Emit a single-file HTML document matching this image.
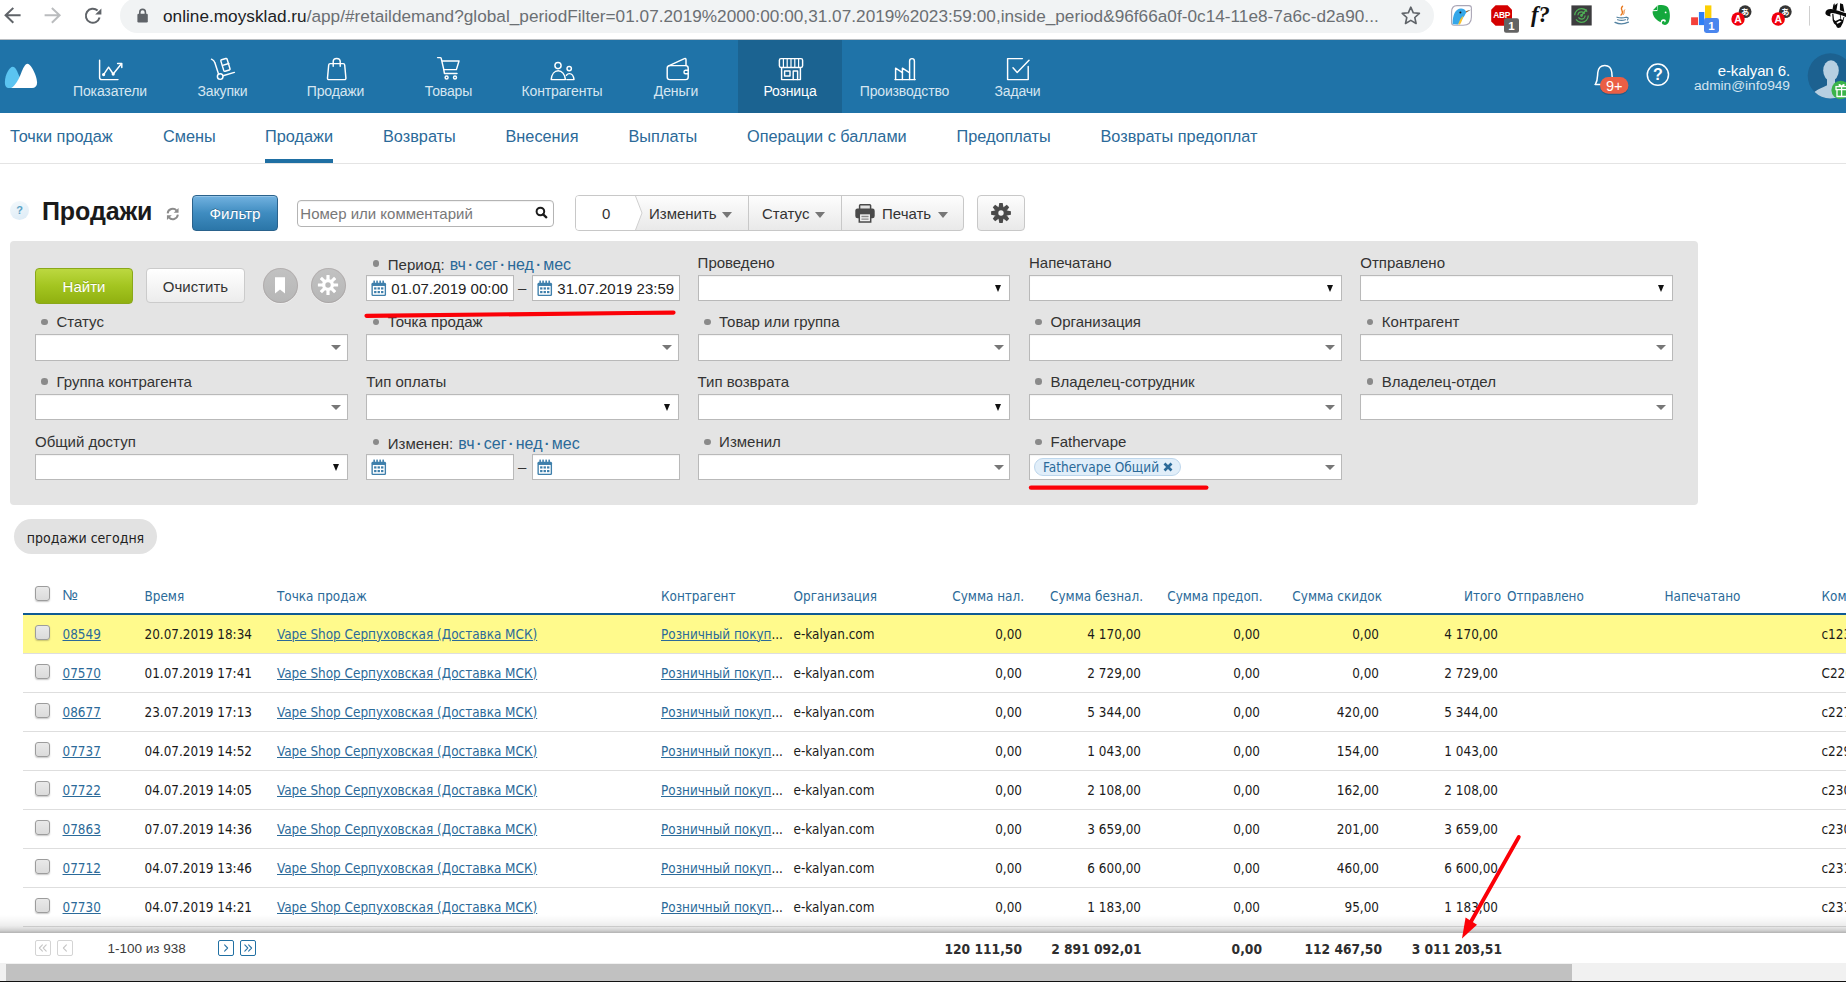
<!DOCTYPE html>
<html lang="ru">
<head>
<meta charset="utf-8">
<title>МойСклад — Продажи</title>
<style>
*{box-sizing:border-box;margin:0;padding:0}
html,body{width:1846px;height:982px;overflow:hidden;background:#fff}
body{position:relative;font-family:"Liberation Sans",Arial,sans-serif;font-size:15px;color:#333}
.abs{position:absolute}
a{color:inherit}
/* ---------- browser chrome ---------- */
#chrome{position:absolute;left:0;top:0;width:1846px;height:40px;background:#fff}
#pill{position:absolute;left:120px;top:-2px;width:1314px;height:35px;border-radius:18px;background:#f1f3f4}
#url{position:absolute;left:163px;top:5px;font-size:17.2px;line-height:22px;white-space:nowrap;color:#6b6f73;letter-spacing:0.02px}
#url b{font-weight:normal;color:#202124}
/* ---------- main nav ---------- */
#nav{position:absolute;left:0;top:40px;width:1846px;height:73px;background:#1f73a8}
#nav .act{position:absolute;left:738px;top:0;width:104px;height:73px;background:#1b6391}
.ni{position:absolute;top:43px;width:140px;margin-left:-70px;text-align:center;font-size:14px;line-height:16px;color:#d6e6f1;letter-spacing:-0.15px;white-space:nowrap}
.ni.on{color:#fff}
.nic{position:absolute;top:16px;width:30px;height:28px;margin-left:-15px}
.nic svg{display:block;width:30px;height:28px;fill:none;stroke:#fff;stroke-width:1.4;stroke-linecap:round;stroke-linejoin:round}
/* ---------- sub nav ---------- */
#subnav{position:absolute;left:0;top:113px;width:1846px;height:51px;background:#fff;border-bottom:1px solid #e4e4e4}
.sn{position:absolute;top:14px;font-size:16.3px;line-height:19px;color:#2b6a99;white-space:nowrap}
#snu{position:absolute;left:265px;top:46px;width:68px;height:4px;background:#1f6fa3}

/* ---------- toolbar ---------- */
#help{position:absolute;left:10px;top:201px;width:19px;height:19px;border-radius:50%;background:linear-gradient(160deg,#f4f9fc,#dcebf6);color:#5da3c6;font:bold 11px/19px "Liberation Sans",Arial,sans-serif;text-align:center}
#title{position:absolute;left:42px;top:196px;font-weight:bold;font-size:25px;line-height:30px;color:#1a1a1a;white-space:nowrap;letter-spacing:-0.1px}
#bfilter{position:absolute;left:192px;top:195px;width:86px;height:36px;border:1px solid #2a628c;border-radius:4px;background:linear-gradient(#72b2e0,#3f8cc0 50%,#2b76a8);color:#fff;font-size:15.200px;line-height:35px;text-align:center;text-shadow:0 -1px 0 rgba(0,0,0,.25);box-shadow:inset 0 1px 0 rgba(255,255,255,.25)}
#search{position:absolute;left:297px;top:200px;width:257px;height:27px;border:1px solid #b4b4b4;border-radius:4px;background:#fff;box-shadow:inset 0 1px 1px rgba(0,0,0,.06)}
#search span{position:absolute;left:2.300px;top:4px;font-size:15px;line-height:17px;color:#787878;white-space:nowrap}
#bgrp{position:absolute;left:575px;top:195px;width:389px;height:36px;border:1px solid #c8c8c8;border-radius:4px;background:linear-gradient(#fdfdfd,#e9e9e9);overflow:hidden}
#bgrp .t{position:absolute;top:9px;font-size:15px;line-height:17px;color:#333;white-space:nowrap}
#bgrp .sep{position:absolute;top:0;width:1px;height:34px;background:#c8c8c8}
.caret{position:absolute;width:0;height:0;border-left:5.5px solid transparent;border-right:5.5px solid transparent;border-top:6px solid #777}
#bgear{position:absolute;left:977px;top:195px;width:48px;height:36px;border:1px solid #c8c8c8;border-radius:4px;background:linear-gradient(#fdfdfd,#e9e9e9)}

/* ---------- filter panel ---------- */
#filter{position:absolute;left:10px;top:241px;width:1688px;height:264px;border-radius:4px;background:#e4e4e4}
#filter .lb{position:absolute;font-size:15px;line-height:17px;color:#333;white-space:nowrap}
#filter .lb i{position:absolute;left:-15.2px;top:5.6px;width:6.6px;height:6.6px;border-radius:50%;background:#8a8a8a}
#filter .lb a{color:#2b6a99;text-decoration:none;font-size:16px}
#filter .lb s{text-decoration:none;color:#2b6a99;padding:0 2.300px;font-size:14px;font-weight:bold}
#filter .lb a:first-of-type{margin-left:1px}
.sel{position:absolute;width:312.600px;height:27px;border:1px solid #b9b9b9;background:#fff;box-shadow:inset 0 1px 1px rgba(0,0,0,.05)}
.sel.r1{height:26px}
.sel .c{position:absolute;right:5.7px;top:10px;width:0;height:0;border-left:5.2px solid transparent;border-right:5.2px solid transparent;border-top:5.5px solid #777}
.sel .n{position:absolute;right:8px;top:8.5px;width:0;height:0;border-left:3.800px solid transparent;border-right:3.800px solid transparent;border-top:7.400px solid #111}
.dt{position:absolute;width:148px;height:26px;border:1px solid #b9b9b9;background:#fff;font-size:15px;line-height:26px;color:#222;white-space:nowrap;padding-left:24px;box-shadow:inset 0 1px 1px rgba(0,0,0,.05)}
.dt svg{position:absolute;left:4px;top:4px}
#bfind{position:absolute;left:25px;top:27px;width:98px;height:36px;border:1px solid #8aa81a;border-radius:4px;background:linear-gradient(#bcd840,#a3c520 50%,#90b010);color:#fff;font-size:15px;line-height:36px;text-align:center;text-shadow:0 -1px 0 rgba(0,0,0,.18)}
#bclear{position:absolute;left:136px;top:27px;width:99px;height:35px;border:1px solid #cbcbcb;border-radius:4px;background:linear-gradient(#fff,#ececec);color:#333;font-size:15px;line-height:35px;text-align:center}
.rb{position:absolute;width:35px;height:35px;border-radius:50%;background:linear-gradient(#c2c2c2,#b6b6b6);box-shadow:inset 0 0 0 1px rgba(110,90,90,.16),0 1px 0 rgba(255,255,255,.35)}
#chip{position:absolute;left:4px;top:3px;width:147px;height:18px;border-radius:9px;background:#e1eef9;border:1px solid #bdd6ec;color:#2b6a99;font:13.5px/16px "DejaVu Sans Condensed","Liberation Sans",sans-serif;padding:0 0 0 8px;white-space:nowrap}

/* ---------- saved filter pill + table ---------- */
#today{position:absolute;left:14px;top:519px;width:143px;height:35px;border-radius:18px;background:#e2e2e2;font:14px/38px "DejaVu Sans Condensed","Liberation Sans",sans-serif;color:#222;text-align:center;white-space:nowrap}
#tbl{position:absolute;left:23px;top:575px;width:1823px;height:360px;font:13.4px/16px "DejaVu Sans Condensed","Liberation Sans",sans-serif;color:#1a1a1a;overflow:hidden}
#tbl .hl{position:absolute;left:0;top:38px;width:1823px;height:2px;background:#0f5a93}
#tbl .row{position:absolute;left:0;width:1823px;height:39px;border-bottom:1px solid #dedede}
#tbl .row.y{background:#fffa8c}
#tbl .c{position:absolute;top:12px;white-space:nowrap}
#tbl .h .c{top:13.5px;color:#2b6a99}
#tbl .h{position:absolute;left:0;top:0;width:1823px;height:38px}
#tbl .r{text-align:right}
#tbl a{color:#2b6a99;text-decoration:underline;text-underline-offset:1px;text-decoration-thickness:1px}
.cb{position:absolute;left:12px;width:15px;height:15px;border:1px solid #9c9c9c;border-radius:3px;background:linear-gradient(#e9e9e9,#dbdbdb);box-shadow:0 1px 1.5px rgba(0,0,0,.22)}

/* ---------- footer ---------- */
#fshadow{position:absolute;left:0;top:915px;width:1846px;height:18px;background:linear-gradient(rgba(0,0,0,0),rgba(0,0,0,.03) 30%,rgba(0,0,0,.07) 58%,rgba(0,0,0,.11) 70%,rgba(0,0,0,.19) 86%,rgba(0,0,0,.30))}
#fband{display:none}
#foot{position:absolute;left:0;top:933px;width:1846px;height:30px;background:#fff}
.pg{position:absolute;top:7px;width:16px;height:16px;border:1px solid #d4d4d4;border-radius:2px;background:#fff;color:#c0c0c0;font:13px/13px "Liberation Sans",Arial,sans-serif;text-align:center}
.pg.b{border-color:#2170a3;border-width:1.500px}
.pg svg{position:absolute;left:0;top:0}
.pg.b svg{left:-.500px;top:-.500px}
#pgt{position:absolute;left:107.500px;top:7.600px;font-size:13.500px;line-height:16px;color:#3c3c3c;white-space:nowrap}
.tot{position:absolute;top:7.500px;width:130px;text-align:right;font:bold 13.7px/17px "DejaVu Sans Condensed","Liberation Sans",sans-serif;color:#2e2e2e;white-space:nowrap}
#sb{position:absolute;left:0;top:963px;width:1846px;height:19px;background:#f1f1f1}
#sbt{position:absolute;left:6px;top:1px;width:1566px;height:17px;background:#c1c1c1}
#sbl{position:absolute;left:0;top:981px;width:1846px;height:1px;background:#111}

#uname{position:absolute;right:56px;top:22px;font-size:15px;line-height:17px;color:#fff;white-space:nowrap;letter-spacing:-0.1px}
#umail{position:absolute;right:56px;top:38px;font-size:13.7px;line-height:16px;color:#d3e4f0;white-space:nowrap}
#filter .lb.p i{top:4.2px}
</style>
</head>
<body>

<!-- ================= browser chrome ================= -->
<div id="chrome">
  <div id="pill"></div>
  <svg class="abs" style="left:0;top:0" width="1846" height="40" viewBox="0 0 1846 40">
    <rect x="0" y="39" width="1846" height="1" fill="#b9bdc1"/>
    <!-- back / forward / reload -->
    <g fill="none" stroke="#5f6368" stroke-width="2" stroke-linecap="square" stroke-linejoin="miter">
      <path d="M19.6 15.3H6.6M12.6 8.6L5.6 15.3L12.6 22"/>
      <path d="M45.6 15.3H58.6M52.6 8.6L59.6 15.3L52.6 22" stroke="#babcbe"/>
      <path d="M99.6 17.6A7 7 0 1 1 97.6 10.6" stroke-linecap="butt"/>
    </g>
    <path d="M101.4 8.4V14.6H95.2z" fill="#5f6368"/>
    <!-- lock -->
    <rect x="137.4" y="13.8" width="10.4" height="8.6" rx="1.2" fill="#5f6368"/>
    <path d="M139.8 14V12.2A2.8 2.8 0 0 1 145.4 12.2V14" fill="none" stroke="#5f6368" stroke-width="1.6"/>
    <!-- star -->
    <path d="M1410.8 7.2l2.5 5.6 6.1.6-4.6 4.1 1.3 6-5.3-3.1-5.3 3.1 1.3-6-4.6-4.1 6.100-.6z" fill="none" stroke="#5f6368" stroke-width="1.6" stroke-linejoin="round"/>
    <!-- kingfisher -->
    <path d="M1457 5.6H1469Q1471.400 5.600 1471.400 8V17Q1471.400 25.200 1463 25.200H1454Q1451.600 25.200 1451.600 22.800V12Q1451.600 5.600 1457 5.600z" fill="#fff" stroke="#aaa6b6" stroke-width="1.1"/>
    <path d="M1452.600 24.200C1452.600 15 1455.500 8.600 1461 8.600C1463.400 8.600 1465 9.800 1465.800 11.200L1470.800 9.800L1466.200 12.600C1464.500 17 1460.500 21 1458 24.400z" fill="#35a7e9"/>
    <path d="M1465.800 11.200L1470.800 9.800L1466.200 12.600z" fill="#b5651d"/>
    <path d="M1458.200 24.400C1459 21 1461 18 1463.200 15.800C1463 19 1461.500 22 1460 24.400z" fill="#f7c331"/>
    <circle cx="1460.400" cy="12.600" r="1" fill="#1a1a1a"/>
    <!-- ABP -->
    <path d="M1495.600 5.300H1507.600L1512 9.700V21.400L1507.600 25.800H1495.600L1491.200 21.400V9.700z" fill="#d40000"/>
    <text x="1501.600" y="18.400" font-family="Liberation Sans, Arial, sans-serif" font-weight="bold" font-size="8.400" fill="#fff" text-anchor="middle" letter-spacing="-0.300">ABP</text>
    <rect x="1504" y="18.200" width="15" height="14.600" rx="2" fill="#636363"/>
    <text x="1511.500" y="30" font-family="Liberation Sans, Arial, sans-serif" font-weight="bold" font-size="11.500" fill="#fff" text-anchor="middle">1</text>
    <!-- f? -->
    <text x="1531" y="22" font-family="Liberation Serif, serif" font-style="italic" font-size="22.500" font-weight="bold" fill="#111">f?</text>
    <!-- dark square with radar -->
    <rect x="1571.400" y="5.400" width="20.300" height="20.100" fill="#3d3d3f"/>
    <g fill="none" stroke="#4fb356" stroke-width="1.200"><circle cx="1581.500" cy="15.500" r="6.800" stroke-dasharray="17 4.400"/><circle cx="1581.500" cy="15.500" r="3.600" stroke-dasharray="9 2.300"/><circle cx="1581.500" cy="15.500" r=".8"/><path d="M1581.500 15.500L1586.500 9.500"/></g>
    <!-- java -->
    <g fill="none" stroke-linecap="round"><path d="M1622.600 6.200C1618.500 9.500 1625.500 11 1621 15" stroke="#e8761a" stroke-width="1.300"/><path d="M1624.600 9.800C1622.800 11.500 1625.300 12.500 1623.300 14.600" stroke="#e8761a" stroke-width="1"/><path d="M1617 17.200Q1621.500 18.600 1626 17.200M1617.600 19.700Q1621.500 21 1625.400 19.700M1626.400 17.400Q1629.400 17.400 1627.400 20" stroke="#5382a1" stroke-width="1.200"/><path d="M1615 22.400Q1621.500 25.400 1628.400 22.200" stroke="#5382a1" stroke-width="1.300"/></g>
    <!-- evernote -->
    <path d="M1657.600 5.400C1662 4.400 1666.500 5 1668 7.500C1670 11 1670.600 17 1669 21.500C1668 24.500 1665.500 25.400 1663.300 24.600C1661.300 23.800 1661.600 21.300 1663.300 21.100C1664.500 21 1664.900 22 1664.400 22.600C1666.400 22 1666.300 19.500 1664 19.300C1661.500 19.100 1660.600 21 1660.800 22.300C1656.500 20.500 1652.300 16 1652.600 11.200L1657.400 10.900z" fill="#14a83c"/>
    <path d="M1652.900 10.200L1657 6V10z" fill="#14a83c"/><circle cx="1665.600" cy="12.400" r=".9" fill="#fff"/>
    <!-- bars -->
    <rect x="1691.100" y="17.300" width="6.900" height="7.800" fill="#f4413b"/><rect x="1698.900" y="12" width="5.400" height="13.100" fill="#2d7ff5"/><rect x="1705" y="5.400" width="6.400" height="14" fill="#fccf03"/>
    <rect x="1704" y="18" width="15" height="14.900" rx="2.400" fill="#4a86ee"/>
    <text x="1711.500" y="29.900" font-family="Liberation Sans, Arial, sans-serif" font-weight="bold" font-size="11.500" fill="#fff" text-anchor="middle">1</text>
    <!-- red A x2 -->
    <g id="ra"><circle cx="1745.100" cy="11.700" r="6.400" fill="#353535"/><text x="1745.100" y="15" font-family="Liberation Sans, Noto Sans CJK JP, sans-serif" font-size="8.500" font-weight="bold" fill="#fff" text-anchor="middle">あ</text><circle cx="1738" cy="19" r="6.700" fill="#f0000c"/><text x="1738" y="23" font-family="Liberation Sans, Arial, sans-serif" font-weight="bold" font-size="10.500" fill="#fff" text-anchor="middle">A</text></g>
    <use href="#ra" x="40.200"/>
    <rect x="1809" y="6" width="1" height="19.600" fill="#cfcfcf"/>
    <!-- profile avatar (hat + beard) -->
    <path d="M1825.400 12.800C1825.600 10.400 1827.600 9 1831 9.100C1834.500 9.300 1839 11.400 1846 13.200V17C1841 15.200 1836 13.400 1832.200 13.100C1830.200 13 1829.800 14 1830.700 16.400C1828 16.200 1825.200 14.800 1825.400 12.800z" fill="#0a0a0a"/>
    <path d="M1832.500 9.400L1833.400 4.600L1835 3.300L1834.400 5.600L1837.700 3.100L1836.400 10.600z" fill="#0a0a0a"/>
    <path d="M1840 3.200L1843 4.300L1844.400 11.900L1839.900 10.200z" fill="#0a0a0a"/>
    <path d="M1832.200 13.800L1833.400 14.100L1834 19.800L1835.500 21.100L1840.400 18.800L1842.700 20.100L1843.500 16.900L1844.400 17.100L1843.100 22.600L1840.600 27.200L1838.600 28L1837 27.600L1835.800 25L1834 23.400L1832.700 20.400z" fill="#0a0a0a"/>
    <path d="M1836.400 22.700L1839.400 20.800L1841.600 21.400L1839 23.100L1837.400 23.700z" fill="#fff"/>
    <path d="M1840.300 14.800L1840.700 18.800" stroke="#0a0a0a" stroke-width=".8"/>
  </svg>

  <div id="url"><b>online.moysklad.ru</b>/app/#retaildemand?global_periodFilter=01.07.2019%2000:00:00,31.07.2019%2023:59:00,inside_period&amp;96f66a0f-0c14-11e8-7a6c-d2a90...</div>
</div>

<!-- ================= main nav ================= -->
<div id="nav">
  <div class="act"></div>
  <svg class="abs" style="left:0;top:0" width="1846" height="73" viewBox="0 40 1846 73" fill="none" stroke="#fff" stroke-width="1.45" stroke-linecap="round" stroke-linejoin="round">
    <!-- logo -->
    <path d="M4.9 82C4.9 75 9.4 66.8 12.8 66.8C15.4 66.8 17.4 71.6 19.4 76.6L16 88H9.4C6 88 4.9 86 4.9 82z" fill="#5bc4f1" stroke="none"/>
    <path d="M11.2 87.9C15.6 85.4 18.6 79 21 73.4C23.2 68.2 25 63.7 27.5 63.7C31 63.7 37.1 76 37.1 82.4C37.1 86 35.2 87.9 32 87.9z" fill="#fff" stroke="none"/>
    <!-- chart -->
    <path d="M99.6 60.2V77.5Q99.6 79.6 101.7 79.6H118"/><path d="M103.6 74.6L108.6 67.2L113.2 74L121.4 63.8"/><path d="M117.6 63.4H121.8V67.6"/><circle cx="103.6" cy="74.6" r=".9" fill="#fff"/><circle cx="113.2" cy="74" r=".9" fill="#fff"/>
    <!-- hand truck -->
    <path d="M211.5 59.2Q214.2 60.4 214.8 62.6L218.6 74.2"/><circle cx="220.2" cy="76.6" r="2.8"/><path d="M223 75.8L234.4 72.4"/>
    <path d="M221.6 59.8l4.2-1.3q1-.3 1.3.7l2.9 9.5q.3 1-.7 1.3l-4.2 1.3q-1 .3-1.3-.7l-2.9-9.5q-.3-1 .7-1.3z"/><path d="M222.6 65.4l6.2-1.9"/>
    <!-- bag -->
    <path d="M330.2 63.6H343.2Q344.6 63.6 344.7 65L345.9 78Q346 79.6 344.4 79.6H329Q327.4 79.6 327.5 78L328.7 65Q328.8 63.6 330.2 63.6z"/><path d="M333.2 66.2V61.6Q333.2 58.4 336.7 58.4Q340.2 58.4 340.2 61.6V66.2"/>
    <!-- cart -->
    <path d="M437.6 57.6H440.2Q441 57.6 441.2 58.4L443.8 69.6H456.4L459 61H442"/><path d="M443.8 69.6L444.4 73.4H457"/><circle cx="446.6" cy="77.4" r="1.5"/><circle cx="455" cy="77.4" r="1.5"/>
    <!-- people -->
    <circle cx="558" cy="65.6" r="3.1"/><path d="M551.2 79.6C551.6 74 554.6 70.8 558.2 70.8C561.8 70.8 565 74 565.4 79.6z"/>
    <circle cx="569.2" cy="68.6" r="2.2"/><path d="M566.8 79.6H574C573.6 76 571.8 73.6 569.4 73.6C568.2 73.6 567.2 74.2 566.4 75.2"/>
    <!-- wallet -->
    <path d="M669.8 65.6H685.6Q688.2 65.6 688.2 68.2V77Q688.2 79.6 685.6 79.6H669.8Q667.2 79.6 667.2 77V68.2Q667.2 65.6 669.8 65.6z"/><path d="M668.6 65.8L684.4 58.6Q686 58 686 59.8V65.4"/><path d="M688.2 70.2H685.4Q684 70.2 684 72Q684 73.8 685.4 73.8H688.2"/>
    <!-- store -->
    <path d="M781 58.6H801Q802.6 58.6 802.6 60.2V65.8Q802.6 67.4 801 67.4H781Q779.4 67.4 779.4 65.8V60.2Q779.4 58.6 781 58.6z"/><path d="M783.4 58.8V67M787.2 58.8V67M791 58.8V67M794.8 58.8V67M798.6 58.8V67" stroke-width="1.2"/>
    <path d="M781.6 67.6V79.6H800.4V67.6"/><rect x="784.6" y="71" width="5.4" height="5"/><path d="M793.2 79.4V71H797.6V79.4"/>
    <!-- factory -->
    <path d="M909.6 79.6V61Q909.6 58.6 912 58.6Q914.4 58.6 914.4 61V79.6"/><path d="M895.6 79.6V68.2L902.4 72.6V68.2L909.4 72.6"/><path d="M895 79.6H915.2"/><path d="M902.4 72.6V79.4" />
    <!-- check -->
    <path d="M1022.4 58.6H1007.6V79.6H1028.2V66.4"/><path d="M1013 67.8L1017.2 72.4L1029 60.2"/>
  </svg>
  <svg class="abs" style="left:1580px;top:0" width="266" height="73" viewBox="1580 40 266 73">
    <!-- bell -->
    <path d="M1595.400 84.300C1598 80 1597.400 76 1597.800 72.500C1598.300 68 1601 65.400 1604.800 65.400C1608.600 65.400 1611.300 68 1611.800 72.500C1612.200 76 1611.600 80 1614.200 84.300" fill="none" stroke="#fff" stroke-width="1.500" stroke-linecap="round"/>
    <path d="M1595.200 84.400H1601" fill="none" stroke="#fff" stroke-width="1.500" stroke-linecap="round"/>
    <rect x="1600" y="78.200" width="28.400" height="16.800" rx="8.400" fill="rgba(20,60,90,.35)"/>
    <rect x="1600" y="77" width="28.400" height="16.800" rx="8.400" fill="#ea5f45"/>
    <text x="1614.200" y="90.600" font-family="Liberation Sans, Arial, sans-serif" font-size="14.500" fill="#fff" text-anchor="middle">9+</text>
    <!-- help -->
    <circle cx="1657.900" cy="74.700" r="10.600" fill="none" stroke="#fff" stroke-width="1.500"/>
    <text x="1657.900" y="80.400" font-family="Liberation Sans, Arial, sans-serif" font-weight="bold" font-size="16" fill="#fff" text-anchor="middle">?</text>
    <!-- avatar -->
    <circle cx="1830.300" cy="75.800" r="22.600" fill="#1c6190"/>
    <clipPath id="avc"><circle cx="1830.300" cy="75.800" r="22.600"/></clipPath>
    <g clip-path="url(#avc)" fill="#b7cfe1"><ellipse cx="1831" cy="70.600" rx="7.800" ry="10.400"/><path d="M1827 78H1835V86H1827z"/><path d="M1810 100C1811 92 1818 89.500 1826.500 85.500H1835.500C1844 89.500 1851 92 1852 100z"/></g>
    <circle cx="1840.600" cy="90" r="9.200" fill="#3bb44a"/>
    <g fill="none" stroke="#fff" stroke-width="1.300"><rect x="1836" y="86.600" width="12" height="3"/><path d="M1837 89.800V96.500H1848"/><path d="M1841.600 86.600V96.500"/><path d="M1841.600 86.400C1839 83 1837.600 85.500 1841.600 86.400C1845.600 85.500 1844.200 83 1841.600 86.400"/></g>
  </svg>
  <div id="uname">e-kalyan 6.</div>
  <div id="umail">admin@info949</div>
  <div class="ni" style="left:110px">Показатели</div>
  <div class="ni" style="left:222.5px">Закупки</div>
  <div class="ni" style="left:335.5px">Продажи</div>
  <div class="ni" style="left:448.5px">Товары</div>
  <div class="ni" style="left:562px">Контрагенты</div>
  <div class="ni" style="left:676px">Деньги</div>
  <div class="ni on" style="left:790px">Розница</div>
  <div class="ni" style="left:904.5px">Производство</div>
  <div class="ni" style="left:1017.5px">Задачи</div>
</div>

<!-- ================= sub nav ================= -->
<div id="subnav">
  <div class="sn" style="left:10px">Точки продаж</div>
  <div class="sn" style="left:163px">Смены</div>
  <div class="sn" style="left:265px">Продажи</div>
  <div class="sn" style="left:383px">Возвраты</div>
  <div class="sn" style="left:505.5px">Внесения</div>
  <div class="sn" style="left:628.5px">Выплаты</div>
  <div class="sn" style="left:747px">Операции с баллами</div>
  <div class="sn" style="left:956.5px">Предоплаты</div>
  <div class="sn" style="left:1100.5px">Возвраты предоплат</div>
  <div id="snu"></div>
</div>

<!-- ================= toolbar ================= -->
<div id="help">?</div>
<div id="title">Продажи</div>
<svg class="abs" style="left:166.300px;top:206.500px" width="13.500" height="14" viewBox="0 0 14 14" fill="none" stroke="#8b8b8b" stroke-width="2"><path d="M1.700 6.300A5.300 5.300 0 0 1 11 3.500"/><path d="M12.300 7.700A5.300 5.300 0 0 1 3 10.500"/><path d="M13 .800v5H8z" fill="#8b8b8b" stroke="none"/><path d="M1 13.200v-5H6z" fill="#8b8b8b" stroke="none"/></svg>
<div id="bfilter">Фильтр</div>
<div id="search"><span>Номер или комментарий</span>
  <svg class="abs" style="left:237.300px;top:5.300px" width="14" height="14" viewBox="0 0 14 14" fill="none" stroke="#1c1c1c" stroke-width="2"><circle cx="5.400" cy="5.500" r="3.800"/><path d="M8.200 8.400l3.100 2.900" stroke-width="2.300" stroke-linecap="round"/></svg>
</div>
<div id="bgrp">
  <svg class="abs" style="left:0;top:0" width="70" height="34" viewBox="0 0 70 34"><path d="M0 0H59.5L66 17L59.5 34H0z" fill="#fff"/><path d="M59.5 0L66 17L59.5 34" fill="none" stroke="#cfcfcf" stroke-width="1"/></svg>
  <div class="t" style="left:26px">0</div>
  <div class="t" style="left:73px">Изменить</div><div class="caret" style="left:146px;top:16px"></div>
  <div class="sep" style="left:172px"></div>
  <div class="t" style="left:186px">Статус</div><div class="caret" style="left:239px;top:16px"></div>
  <div class="sep" style="left:265px"></div>
  <svg class="abs" style="left:279px;top:8px" width="20" height="19" viewBox="0 0 20 19"><rect x="4.600" y=".800" width="11" height="5" rx=".800" fill="#e2e2e2" stroke="#4a4a4a" stroke-width="1.500"/><rect x=".300" y="4.600" width="19.400" height="9.600" rx="2.200" fill="#4a4a4a"/><rect x="4.300" y="9.600" width="11.400" height="8.400" fill="#f1f1f1" stroke="#4a4a4a" stroke-width="1.500"/><path d="M6.400 12.500h7.200M6.400 15.200h7.200" stroke="#8a8a8a" stroke-width="1.300"/></svg>
  <div class="t" style="left:306px">Печать</div><div class="caret" style="left:362px;top:16px"></div>
</div>
<div id="bgear">
  <svg class="abs" style="left:13px;top:7px" width="20" height="20" viewBox="-10 -10 20 20"><g fill="#4a4a4a"><circle r="6.500"/><path id="gt" d="M-1.700 -9.900h3.400l.7 4h-4.800z M-1.700 9.900h3.400l.7 -4h-4.800z"/><use href="#gt" transform="rotate(45)"/><use href="#gt" transform="rotate(90)"/><use href="#gt" transform="rotate(135)"/></g><circle r="2.700" fill="#f3f3f3"/></svg>
</div>


<!-- ================= filter panel ================= -->
<div id="filter">
<div id="bfind">Найти</div><div id="bclear">Очистить</div>
<div class="rb" style="left:253px;top:27px"><svg class="abs" style="left:12px;top:9px" width="10" height="17" viewBox="0 0 10 17"><path d="M0 .2h10v16.200L5 12.400 0 16.400z" fill="#fff"/></svg></div>
<div class="rb" style="left:301px;top:27px"><svg class="abs" style="left:5.500px;top:5.500px" width="22" height="22" viewBox="-11 -11 22 22"><g fill="#fff"><circle r="6"/><rect id="g2" x="-1.600" y="-10.100" width="3.200" height="20.200" rx=".4"/><use href="#g2" transform="rotate(45)"/><use href="#g2" transform="rotate(90)"/><use href="#g2" transform="rotate(135)"/></g><circle r="2.700" fill="#bababa"/></svg></div>
<div class="lb p" style="left:377.8px;top:15px"><i></i>Период: <a>вч</a><s>·</s><a>сег</a><s>·</s><a>нед</a><s>·</s><a>мес</a></div>
<div class="dt" style="left:356.3px;top:34px"><svg width="15.500" height="16.500" viewBox="0 0 17 18"><rect x=".5" y="3" width="16" height="14.5" rx="1.5" fill="#3e7fab"/><rect x="2" y="6.5" width="13" height="9.6" fill="#fff"/><g fill="#3e7fab"><rect x="3.4" y="8" width="2.6" height="2.4"/><rect x="7.2" y="8" width="2.6" height="2.4"/><rect x="11" y="8" width="2.6" height="2.4"/><rect x="3.4" y="12" width="2.6" height="2.4"/><rect x="7.2" y="12" width="2.6" height="2.4"/><rect x="11" y="12" width="2.6" height="2.4"/><rect x="2.6" y=".6" width="1.7" height="3.4"/><rect x="5.8" y=".6" width="1.7" height="3.4"/><rect x="9.2" y=".6" width="1.7" height="3.4"/><rect x="12.5" y=".6" width="1.7" height="3.4"/></g></svg>01.07.2019 00:00</div><div class="lb" style="left:508px;top:38px">–</div><div class="dt" style="left:522.3px;top:34px"><svg width="15.500" height="16.500" viewBox="0 0 17 18"><rect x=".5" y="3" width="16" height="14.5" rx="1.5" fill="#3e7fab"/><rect x="2" y="6.5" width="13" height="9.6" fill="#fff"/><g fill="#3e7fab"><rect x="3.4" y="8" width="2.6" height="2.4"/><rect x="7.2" y="8" width="2.6" height="2.4"/><rect x="11" y="8" width="2.6" height="2.4"/><rect x="3.4" y="12" width="2.6" height="2.4"/><rect x="7.2" y="12" width="2.6" height="2.4"/><rect x="11" y="12" width="2.6" height="2.4"/><rect x="2.6" y=".6" width="1.7" height="3.4"/><rect x="5.8" y=".6" width="1.7" height="3.4"/><rect x="9.2" y=".6" width="1.7" height="3.4"/><rect x="12.5" y=".6" width="1.7" height="3.4"/></g></svg>31.07.2019 23:59</div>
<div class="lb" style="left:687.6px;top:12.5px">Проведено</div>
<div class="sel r1" style="left:687.6px;top:34px"><div class="n"></div></div>
<div class="lb" style="left:1019px;top:12.5px">Напечатано</div>
<div class="sel r1" style="left:1019px;top:34px"><div class="n"></div></div>
<div class="lb" style="left:1350.3px;top:12.5px">Отправлено</div>
<div class="sel r1" style="left:1350.3px;top:34px"><div class="n"></div></div>
<div class="lb" style="left:46.5px;top:72px"><i></i>Статус</div>
<div class="sel " style="left:25px;top:93px"><div class="c"></div></div>
<div class="lb" style="left:377.8px;top:72px"><i></i>Точка продаж</div>
<div class="sel " style="left:356.3px;top:93px"><div class="c"></div></div>
<div class="lb" style="left:709.1px;top:72px"><i></i>Товар или группа</div>
<div class="sel " style="left:687.6px;top:93px"><div class="c"></div></div>
<div class="lb" style="left:1040.5px;top:72px"><i></i>Организация</div>
<div class="sel " style="left:1019px;top:93px"><div class="c"></div></div>
<div class="lb" style="left:1371.8px;top:72px"><i></i>Контрагент</div>
<div class="sel " style="left:1350.3px;top:93px"><div class="c"></div></div>
<div class="lb" style="left:46.5px;top:131.5px"><i></i>Группа контрагента</div>
<div class="sel r1" style="left:25px;top:153px"><div class="c"></div></div>
<div class="lb" style="left:356.3px;top:131.5px">Тип оплаты</div>
<div class="sel r1" style="left:356.3px;top:153px"><div class="n"></div></div>
<div class="lb" style="left:687.6px;top:131.5px">Тип возврата</div>
<div class="sel r1" style="left:687.6px;top:153px"><div class="n"></div></div>
<div class="lb" style="left:1040.5px;top:131.5px"><i></i>Владелец-сотрудник</div>
<div class="sel r1" style="left:1019px;top:153px"><div class="c"></div></div>
<div class="lb" style="left:1371.8px;top:131.5px"><i></i>Владелец-отдел</div>
<div class="sel r1" style="left:1350.3px;top:153px"><div class="c"></div></div>
<div class="lb" style="left:25px;top:192px">Общий доступ</div>
<div class="sel r1" style="left:25px;top:213px"><div class="n"></div></div>
<div class="lb p" style="left:377.8px;top:193.5px"><i></i>Изменен: <a>вч</a><s>·</s><a>сег</a><s>·</s><a>нед</a><s>·</s><a>мес</a></div>
<div class="dt" style="left:356.3px;top:213px"><svg width="15.500" height="16.500" viewBox="0 0 17 18"><rect x=".5" y="3" width="16" height="14.5" rx="1.5" fill="#3e7fab"/><rect x="2" y="6.5" width="13" height="9.6" fill="#fff"/><g fill="#3e7fab"><rect x="3.4" y="8" width="2.6" height="2.4"/><rect x="7.2" y="8" width="2.6" height="2.4"/><rect x="11" y="8" width="2.6" height="2.4"/><rect x="3.4" y="12" width="2.6" height="2.4"/><rect x="7.2" y="12" width="2.6" height="2.4"/><rect x="11" y="12" width="2.6" height="2.4"/><rect x="2.6" y=".6" width="1.7" height="3.4"/><rect x="5.8" y=".6" width="1.7" height="3.4"/><rect x="9.2" y=".6" width="1.7" height="3.4"/><rect x="12.5" y=".6" width="1.7" height="3.4"/></g></svg></div><div class="lb" style="left:508px;top:217px">–</div><div class="dt" style="left:522.3px;top:213px"><svg width="15.500" height="16.500" viewBox="0 0 17 18"><rect x=".5" y="3" width="16" height="14.5" rx="1.5" fill="#3e7fab"/><rect x="2" y="6.5" width="13" height="9.6" fill="#fff"/><g fill="#3e7fab"><rect x="3.4" y="8" width="2.6" height="2.4"/><rect x="7.2" y="8" width="2.6" height="2.4"/><rect x="11" y="8" width="2.6" height="2.4"/><rect x="3.4" y="12" width="2.6" height="2.4"/><rect x="7.2" y="12" width="2.6" height="2.4"/><rect x="11" y="12" width="2.6" height="2.4"/><rect x="2.6" y=".6" width="1.7" height="3.4"/><rect x="5.8" y=".6" width="1.7" height="3.4"/><rect x="9.2" y=".6" width="1.7" height="3.4"/><rect x="12.5" y=".6" width="1.7" height="3.4"/></g></svg></div>
<div class="lb" style="left:709.1px;top:192px"><i></i>Изменил</div>
<div class="sel r1" style="left:687.6px;top:213px"><div class="c"></div></div>
<div class="lb" style="left:1040.5px;top:192px"><i></i>Fathervape</div>
<div class="sel r1" style="left:1019px;top:213px"><div class="c"></div><div id="chip">Fathervape Общий<svg class="abs" style="left:127.5px;top:3px" width="10" height="10" viewBox="0 0 10 10"><path d="M1.5 1.5l7 7M8.5 1.5l-7 7" stroke="#2b6a99" stroke-width="2.7"/></svg></div></div>
</div>

<!-- ================= table ================= -->
<div id="today">продажи сегодня</div>
<div id="tbl">
<div class="h">
<div class="cb" style="top:11px"></div>
<div class="c" style="left:39.5px"><span style="font-family:'Liberation Sans',Arial,sans-serif;font-size:14.500px;position:relative;top:-1.200px">№</span></div>
<div class="c" style="left:121.5px">Время</div>
<div class="c" style="left:254px">Точка продаж</div>
<div class="c" style="left:638px">Контрагент</div>
<div class="c" style="left:770.5px">Организация</div>
<div class="c" style="left:1484px">Отправлено</div>
<div class="c" style="left:1641.5px">Напечатано</div>
<div class="c" style="left:1798.5px">Комментарий</div>
<div class="c r" style="left:881px;width:120px">Сумма нал.</div>
<div class="c r" style="left:1000px;width:120px">Сумма безнал.</div>
<div class="c r" style="left:1119.5px;width:120px">Сумма предоп.</div>
<div class="c r" style="left:1239px;width:120px">Сумма скидок</div>
<div class="c r" style="left:1358px;width:120px">Итого</div>
</div><div class="hl"></div>
<div class="row y" style="top:40px"><div class="cb" style="top:10px"></div>
<div class="c" style="left:39.5px"><a>08549</a></div><div class="c" style="left:121.5px">20.07.2019 18:34</div>
<div class="c" style="left:254px"><a>Vape Shop Серпуховская (Доставка МСК)</a></div>
<div class="c" style="left:638px"><a>Розничный покуп</a>...</div><div class="c" style="left:770.5px">e-kalyan.com</div>
<div class="c r" style="left:879px;width:120px">0,00</div>
<div class="c r" style="left:998px;width:120px">4 170,00</div>
<div class="c r" style="left:1117px;width:120px">0,00</div>
<div class="c r" style="left:1236px;width:120px">0,00</div>
<div class="c r" style="left:1355px;width:120px">4 170,00</div>
<div class="c" style="left:1798.5px">с123</div></div>
<div class="row" style="top:79px"><div class="cb" style="top:10px"></div>
<div class="c" style="left:39.5px"><a>07570</a></div><div class="c" style="left:121.5px">01.07.2019 17:41</div>
<div class="c" style="left:254px"><a>Vape Shop Серпуховская (Доставка МСК)</a></div>
<div class="c" style="left:638px"><a>Розничный покуп</a>...</div><div class="c" style="left:770.5px">e-kalyan.com</div>
<div class="c r" style="left:879px;width:120px">0,00</div>
<div class="c r" style="left:998px;width:120px">2 729,00</div>
<div class="c r" style="left:1117px;width:120px">0,00</div>
<div class="c r" style="left:1236px;width:120px">0,00</div>
<div class="c r" style="left:1355px;width:120px">2 729,00</div>
<div class="c" style="left:1798.5px">С226</div></div>
<div class="row" style="top:118px"><div class="cb" style="top:10px"></div>
<div class="c" style="left:39.5px"><a>08677</a></div><div class="c" style="left:121.5px">23.07.2019 17:13</div>
<div class="c" style="left:254px"><a>Vape Shop Серпуховская (Доставка МСК)</a></div>
<div class="c" style="left:638px"><a>Розничный покуп</a>...</div><div class="c" style="left:770.5px">e-kalyan.com</div>
<div class="c r" style="left:879px;width:120px">0,00</div>
<div class="c r" style="left:998px;width:120px">5 344,00</div>
<div class="c r" style="left:1117px;width:120px">0,00</div>
<div class="c r" style="left:1236px;width:120px">420,00</div>
<div class="c r" style="left:1355px;width:120px">5 344,00</div>
<div class="c" style="left:1798.5px">с227</div></div>
<div class="row" style="top:157px"><div class="cb" style="top:10px"></div>
<div class="c" style="left:39.5px"><a>07737</a></div><div class="c" style="left:121.5px">04.07.2019 14:52</div>
<div class="c" style="left:254px"><a>Vape Shop Серпуховская (Доставка МСК)</a></div>
<div class="c" style="left:638px"><a>Розничный покуп</a>...</div><div class="c" style="left:770.5px">e-kalyan.com</div>
<div class="c r" style="left:879px;width:120px">0,00</div>
<div class="c r" style="left:998px;width:120px">1 043,00</div>
<div class="c r" style="left:1117px;width:120px">0,00</div>
<div class="c r" style="left:1236px;width:120px">154,00</div>
<div class="c r" style="left:1355px;width:120px">1 043,00</div>
<div class="c" style="left:1798.5px">с229</div></div>
<div class="row" style="top:196px"><div class="cb" style="top:10px"></div>
<div class="c" style="left:39.5px"><a>07722</a></div><div class="c" style="left:121.5px">04.07.2019 14:05</div>
<div class="c" style="left:254px"><a>Vape Shop Серпуховская (Доставка МСК)</a></div>
<div class="c" style="left:638px"><a>Розничный покуп</a>...</div><div class="c" style="left:770.5px">e-kalyan.com</div>
<div class="c r" style="left:879px;width:120px">0,00</div>
<div class="c r" style="left:998px;width:120px">2 108,00</div>
<div class="c r" style="left:1117px;width:120px">0,00</div>
<div class="c r" style="left:1236px;width:120px">162,00</div>
<div class="c r" style="left:1355px;width:120px">2 108,00</div>
<div class="c" style="left:1798.5px">с230</div></div>
<div class="row" style="top:235px"><div class="cb" style="top:10px"></div>
<div class="c" style="left:39.5px"><a>07863</a></div><div class="c" style="left:121.5px">07.07.2019 14:36</div>
<div class="c" style="left:254px"><a>Vape Shop Серпуховская (Доставка МСК)</a></div>
<div class="c" style="left:638px"><a>Розничный покуп</a>...</div><div class="c" style="left:770.5px">e-kalyan.com</div>
<div class="c r" style="left:879px;width:120px">0,00</div>
<div class="c r" style="left:998px;width:120px">3 659,00</div>
<div class="c r" style="left:1117px;width:120px">0,00</div>
<div class="c r" style="left:1236px;width:120px">201,00</div>
<div class="c r" style="left:1355px;width:120px">3 659,00</div>
<div class="c" style="left:1798.5px">с230</div></div>
<div class="row" style="top:274px"><div class="cb" style="top:10px"></div>
<div class="c" style="left:39.5px"><a>07712</a></div><div class="c" style="left:121.5px">04.07.2019 13:46</div>
<div class="c" style="left:254px"><a>Vape Shop Серпуховская (Доставка МСК)</a></div>
<div class="c" style="left:638px"><a>Розничный покуп</a>...</div><div class="c" style="left:770.5px">e-kalyan.com</div>
<div class="c r" style="left:879px;width:120px">0,00</div>
<div class="c r" style="left:998px;width:120px">6 600,00</div>
<div class="c r" style="left:1117px;width:120px">0,00</div>
<div class="c r" style="left:1236px;width:120px">460,00</div>
<div class="c r" style="left:1355px;width:120px">6 600,00</div>
<div class="c" style="left:1798.5px">с231</div></div>
<div class="row" style="top:313px"><div class="cb" style="top:10px"></div>
<div class="c" style="left:39.5px"><a>07730</a></div><div class="c" style="left:121.5px">04.07.2019 14:21</div>
<div class="c" style="left:254px"><a>Vape Shop Серпуховская (Доставка МСК)</a></div>
<div class="c" style="left:638px"><a>Розничный покуп</a>...</div><div class="c" style="left:770.5px">e-kalyan.com</div>
<div class="c r" style="left:879px;width:120px">0,00</div>
<div class="c r" style="left:998px;width:120px">1 183,00</div>
<div class="c r" style="left:1117px;width:120px">0,00</div>
<div class="c r" style="left:1236px;width:120px">95,00</div>
<div class="c r" style="left:1355px;width:120px">1 183,00</div>
<div class="c" style="left:1798.5px">с231</div></div>
</div>

<!-- ================= footer ================= -->
<div id="fshadow"></div><div id="fband"></div>
<div id="foot">
<div class="pg" style="left:35px"><svg width="14" height="14" viewBox="0 0 14 14" fill="none" stroke="#c6c6c6" stroke-width="1.100" stroke-linecap="round" stroke-linejoin="round"><path d="M6.400 3.800L3.400 7L6.400 10.200M10.200 3.800L7.200 7L10.200 10.200"/></svg></div><div class="pg" style="left:57px"><svg width="14" height="14" viewBox="0 0 14 14" fill="none" stroke="#c6c6c6" stroke-width="1.100" stroke-linecap="round" stroke-linejoin="round"><path d="M8.400 3.800L5.400 7L8.400 10.200"/></svg></div><div id="pgt">1-100 из 938</div><div class="pg b" style="left:218px"><svg width="14" height="14" viewBox="0 0 14 14" fill="none" stroke="#2b74a6" stroke-width="1.100" stroke-linecap="round" stroke-linejoin="round"><path d="M5.600 3.800L8.600 7L5.600 10.200"/></svg></div><div class="pg b" style="left:240px"><svg width="14" height="14" viewBox="0 0 14 14" fill="none" stroke="#2b74a6" stroke-width="1.100" stroke-linecap="round" stroke-linejoin="round"><path d="M3.800 3.800L6.800 7L3.800 10.200M7.600 3.800L10.600 7L7.600 10.200"/></svg></div>
<div class="tot" style="left:892px">120 111,50</div>
<div class="tot" style="left:1011.5px">2 891 092,01</div>
<div class="tot" style="left:1132px">0,00</div>
<div class="tot" style="left:1252px">112 467,50</div>
<div class="tot" style="left:1372px">3 011 203,51</div>
</div>
<div id="sb"><div id="sbt"></div></div><div id="sbl"></div>

<!-- ================= red annotations ================= -->
<svg class="abs" style="left:0;top:0;pointer-events:none" width="1846" height="982" viewBox="0 0 1846 982">
  <path d="M366.500 315.800C440 314.800 560 313.600 673.500 312.600" fill="none" stroke="#fb0007" stroke-width="4.200" stroke-linecap="round"/>
  <path d="M1031 487.600H1206.300" fill="none" stroke="#fb0007" stroke-width="4.400" stroke-linecap="round"/>
  <path d="M1518.8 837L1470.5 922.5" fill="none" stroke="#fb0007" stroke-width="3.800" stroke-linecap="round"/>
  <path d="M1462 938.5L1465.6 917.5L1477 924.8z" fill="#fb0007"/>
</svg>

</body>
</html>
